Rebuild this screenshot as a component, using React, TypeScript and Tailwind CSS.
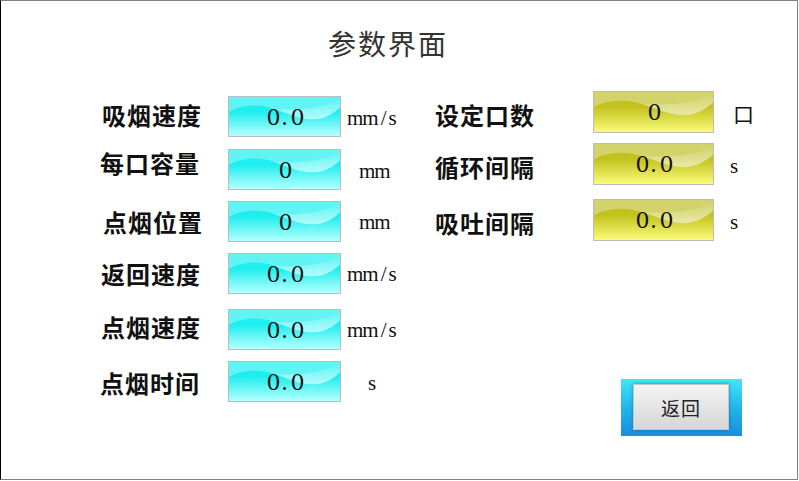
import React from "react";

type Tone = "cyan" | "yellow";

const LEFT_ROWS = [
  { label: "吸烟速度", value: "0.0", unit: "mm/s", rowGap: "mt-0", labelShift: "mb-[3px] pl-[2px]", unitPad: "pl-[6px] mt-[3px]" },
  { label: "每口容量", value: "0", unit: "mm", rowGap: "mt-[12px]", labelShift: "mb-[13px]", unitPad: "pl-[18px] mt-[3px]" },
  { label: "点烟位置", value: "0", unit: "mm", rowGap: "mt-[11px]", labelShift: "mb-0 pl-[3px]", unitPad: "pl-[18px]" },
  { label: "返回速度", value: "0.0", unit: "mm/s", rowGap: "mt-[11px]", labelShift: "mb-0 pl-[1px]", unitPad: "pl-[6px]" },
  { label: "点烟速度", value: "0.0", unit: "mm/s", rowGap: "mt-[15px]", labelShift: "mb-[5px] pl-[1px]", unitPad: "pl-[6px]" },
  { label: "点烟时间", value: "0.0", unit: "s", rowGap: "mt-[11px]", labelShift: "mt-[3px]", unitPad: "pl-[27px] mt-[3px]" },
];

const RIGHT_ROWS = [
  { label: "设定口数", value: "0", unit: "口", rowGap: "mt-0", unitPad: "pl-[19px] mt-[5px]" },
  { label: "循环间隔", value: "0.0", unit: "s", rowGap: "mt-[10px]", unitPad: "pl-[16px] mt-[4px]" },
  { label: "吸吐间隔", value: "0.0", unit: "s", rowGap: "mt-[14px]", unitPad: "pl-[16px] mt-[4px]" },
];

const PALETTE = {
  cyan: { top: "#62f4f4", shine: "#c4fdfd", waveTop: "#1eeeee", waveBottom: "#b6ffff" },
  yellow: { top: "#d3d36c", shine: "#ececb0", waveTop: "#c2c21e", waveBottom: "#fbfb7a" },
};

// glossy background with the wave highlight used by the HMI number fields
function Gloss({ tone, w, h }: { tone: Tone; w: number; h: number }) {
  const c = PALETTE[tone];
  const id = `${tone}-${w}`;
  return (
    <svg className="absolute inset-0 w-full h-full" viewBox={`0 0 ${w} ${h}`} preserveAspectRatio="none">
      <defs>
        <linearGradient id={`${id}-wave`} x1="0" y1="0" x2="0" y2="1">
          <stop offset="0.2" stopColor={c.waveTop} />
          <stop offset="1" stopColor={c.waveBottom} />
        </linearGradient>
        <linearGradient id={`${id}-shine`} x1="0" y1="0" x2="0" y2="1">
          <stop offset="0" stopColor={c.shine} stopOpacity="0" />
          <stop offset="1" stopColor={c.shine} stopOpacity="0.85" />
        </linearGradient>
      </defs>
      <rect width={w} height={h} fill={c.top} />
      <path
        d={`M${w * 0.4},${h * 0.3} C${w * 0.55},${h * 0.45} ${w * 0.68},${h * 0.64} ${w * 0.82},${h * 0.56} C${w * 0.9},${h * 0.5} ${w * 0.97},${h * 0.36} ${w},${h * 0.26} L${w},${h * 0.05} C${w * 0.85},${h * 0.3} ${w * 0.62},${h * 0.34} ${w * 0.4},${h * 0.3} Z`}
        fill={`url(#${id}-shine)`}
      />
      <path
        d={`M0,${h * 0.38} C${w * 0.1},${h * 0.2} ${w * 0.27},${h * 0.16} ${w * 0.4},${h * 0.3} C${w * 0.55},${h * 0.45} ${w * 0.68},${h * 0.64} ${w * 0.82},${h * 0.56} C${w * 0.9},${h * 0.5} ${w * 0.97},${h * 0.36} ${w},${h * 0.26} L${w},${h} L0,${h} Z`}
        fill={`url(#${id}-wave)`}
      />
    </svg>
  );
}

function NumberField({ tone, value, w, h }: { tone: Tone; value: string; w: number; h: number }) {
  return (
    <div
      className={`relative flex-none flex items-center justify-center border border-[#bcbcbc] ${
        tone === "cyan" ? "w-[113px] h-[41px]" : "w-[121px] h-[42px]"
      }`}
    >
      <Gloss tone={tone} w={w} h={h} />
      {/* fixed-width cells so the decimal point sits like a monospaced display */}
      <span className="relative flex pt-[2px] text-[22px] leading-none text-[#111] font-['DejaVu_Serif',serif]">
        {value.split("").map((ch, i) => (
          <span key={i} className="w-[12px] text-center">
            {ch}
          </span>
        ))}
      </span>
    </div>
  );
}

function Unit({ text }: { text: string }) {
  if (text === "口") {
    return <span className="text-[21px] leading-none font-['Noto_Sans_CJK_SC',sans-serif] text-[#111]">口</span>;
  }
  if (text === "mm/s") {
    return (
      <span className="text-[21px] leading-none text-[#111] font-['Liberation_Serif',serif] tracking-[-1px]">
        mm<span className="px-[3px]">/</span>s
      </span>
    );
  }
  return <span className="text-[21px] leading-none text-[#111] font-['Liberation_Serif',serif] tracking-[-1px]">{text}</span>;
}

export default function App() {
  return (
    <div className="w-[798px] h-[480px] box-border bg-white border border-[#7c848c] border-l-black font-['Noto_Sans_CJK_SC',sans-serif] text-[#111]">
      {/* title */}
      <div className="mt-[28px] pr-[22px] flex justify-center">
        <h1 className="text-[28px] leading-[28px] h-[28px] font-normal tracking-[2px] text-[#333]">参数界面</h1>
      </div>

      <div className="flex items-start">
        {/* left column: motion settings */}
        <div className="ml-[99px] mt-[39px] w-[335px] flex flex-col">
          {LEFT_ROWS.map((r) => (
            <div key={r.label} className={`flex items-center h-[41px] ${r.rowGap}`}>
              <div className={`w-[128px] flex-none text-[24px] leading-none font-bold tracking-[1px] ${r.labelShift}`}>
                {r.label}
              </div>
              <NumberField tone="cyan" value={r.value} w={113} h={41} />
              <div className={r.unitPad}>
                <Unit text={r.unit} />
              </div>
            </div>
          ))}
        </div>

        {/* right column: puff counts and intervals */}
        <div className="mt-[34px] flex flex-col">
          {RIGHT_ROWS.map((r) => (
            <div key={r.label} className={`flex items-center h-[42px] ${r.rowGap}`}>
              <div className="w-[158px] flex-none text-[24px] leading-none font-bold tracking-[1px] mt-[6px]">
                {r.label}
              </div>
              <NumberField tone="yellow" value={r.value} w={121} h={42} />
              <div className={r.unitPad}>
                <Unit text={r.unit} />
              </div>
            </div>
          ))}

          <div className="ml-[186px] mt-[138px] w-[121px] h-[57px] pt-[5px] pl-[12px] bg-gradient-to-b from-[#3fe8f6] via-[#22b6ea] to-[#1a8ee0]">
            <button className="w-[96px] h-[46px] border border-[#c6c6c6] bg-gradient-to-b from-[#f4f4f4] to-[#d6d6d6] shadow-[0_0_3px_rgba(0,60,120,0.5)] text-[19px] leading-none text-[#222] font-['Noto_Sans_CJK_SC',sans-serif] tracking-[1px]">
              返回
            </button>
          </div>
        </div>
      </div>
    </div>
  );
}
